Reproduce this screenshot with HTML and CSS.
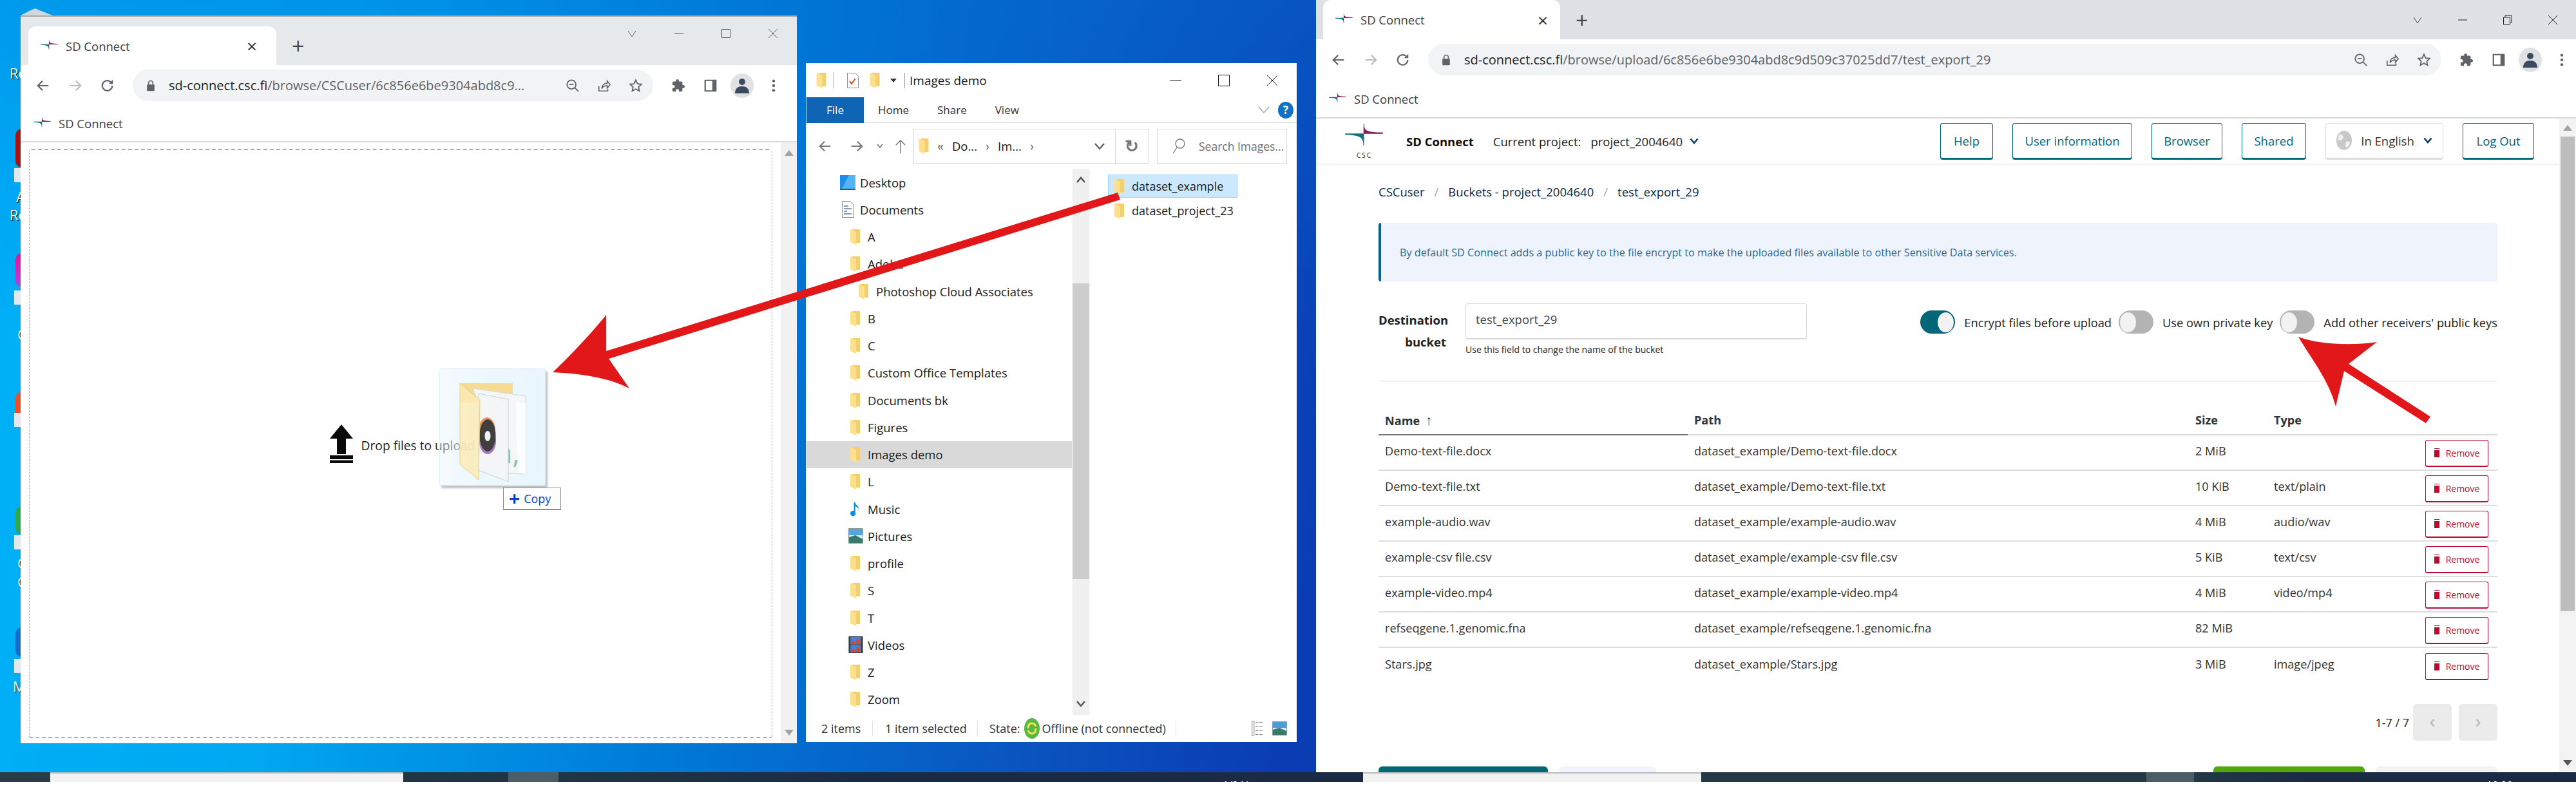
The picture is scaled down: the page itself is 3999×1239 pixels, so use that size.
FILE: index.html
```html
<!DOCTYPE html>
<html lang="en">
<head>
    <meta charset="UTF-8">
    <title>SD Connect - drag and drop upload</title>
    <link rel="stylesheet" href="styles.css">
</head>
<body>
    <svg class="defs" width="0" height="0">
        <symbol id="i-back" viewBox="0 0 24 24"><path d="M21 12H4M11 4l-8 8 8 8" fill="none" stroke="currentColor" stroke-width="2.4"/></symbol>
        <symbol id="i-forward" viewBox="0 0 24 24"><path d="M3 12h17M13 4l8 8-8 8" fill="none" stroke="currentColor" stroke-width="2.4"/></symbol>
        <symbol id="i-reload" viewBox="0 0 24 24"><path d="M20 12a8.5 8.5 0 1 1-2.6-6.2" fill="none" stroke="currentColor" stroke-width="2.4"/><path d="M21 2v7h-7z" fill="currentColor"/></symbol>
        <symbol id="i-lock" viewBox="0 0 24 24"><path d="M8 11V7a4 4 0 0 1 8 0v4" fill="none" stroke="currentColor" stroke-width="2"/><rect x="5" y="10" width="14" height="12" rx="1.5" fill="currentColor"/></symbol>
        <symbol id="i-zoomout" viewBox="0 0 24 24"><circle cx="10" cy="10" r="7.5" fill="none" stroke="currentColor" stroke-width="2"/><path d="M15.5 15.5L22 22M6.5 10h7" stroke="currentColor" stroke-width="2"/></symbol>
        <symbol id="i-share" viewBox="0 0 24 24"><path d="M3 13v8h15v-3M8 17c0-6 4-9 9-9V4l5 6-5 6v-4c-4 0-7 1-9 5z" fill="none" stroke="currentColor" stroke-width="1.8"/></symbol>
        <symbol id="i-star" viewBox="0 0 24 24"><path d="M12 2.500l2.900 6.300 6.800.8-5 4.700 1.300 6.800-6-3.400-6 3.400 1.300-6.800-5-4.700 6.800-.8z" fill="none" stroke="currentColor" stroke-width="2"/></symbol>
        <symbol id="i-puzzle" viewBox="0 0 24 24"><path fill="currentColor" d="M20.5 11H19V7c0-1.1-.9-2-2-2h-4V3.5C13 2.12 11.88 1 10.5 1S8 2.12 8 3.5V5H4c-1.1 0-1.99.9-1.99 2v3.8H3.5c1.49 0 2.7 1.21 2.7 2.7s-1.21 2.7-2.7 2.7H2V20c0 1.1.9 2 2 2h3.8v-1.5c0-1.49 1.21-2.7 2.7-2.7 1.49 0 2.7 1.21 2.7 2.7V22H17c1.1 0 2-.9 2-2v-4h1.5c1.38 0 2.5-1.12 2.5-2.5S21.88 11 20.5 11z"/></symbol>
        <symbol id="i-side" viewBox="0 0 24 24"><path d="M3 3h18v18H3z" fill="none" stroke="currentColor" stroke-width="2.4"/><path d="M15 3h6v18h-6z" fill="currentColor"/></symbol>
        <symbol id="i-avatar" viewBox="0 0 36 38"><ellipse cx="18" cy="19" rx="18" ry="19" fill="#dfe1e5"/><circle cx="18" cy="13" r="5" fill="#3d4a5e"/><path d="M7 31c0-8 5-11 11-11s11 3 11 11z" fill="#3d4a5e"/></symbol>
        <symbol id="i-dots" viewBox="0 0 24 24"><circle cx="12" cy="4" r="2.4" fill="currentColor"/><circle cx="12" cy="12" r="2.4" fill="currentColor"/><circle cx="12" cy="20" r="2.4" fill="currentColor"/></symbol>
        <symbol id="i-csc" viewBox="0 0 72 52"><path d="M34.500 0h1.200c0 13 3 16 35.300 16.500v2.500H34.500z" fill="#8a1c5e"/><path d="M0 18.500h35.500V41h-1.200C34 27 30 21.500 0 21z" fill="#15707c"/></symbol>
        <symbol id="i-folder" viewBox="0 0 15 25"><path d="M3 1h12v21H3z" fill="#f5cf6b"/><path d="M0 1l9 4v20l-9-4z" fill="#fde08e"/></symbol>
        <symbol id="i-chevron" viewBox="0 0 14 10"><path d="M1.500 1.500L7 8l5.500-6.500" fill="none" stroke="#0b3a66" stroke-width="2.600"/></symbol>
    </svg>

    <div class="desktop">
        <!-- bits of desktop shortcuts that stick out from behind the windows -->
        <div class="shortcut sc-bin"></div>
        <span class="sc-label sc-l1">Re</span>
        <div class="shortcut sc-red"></div>
        <div class="shortcut sc-tile sc-t1"></div>
        <span class="sc-label sc-l2">A</span>
        <span class="sc-label sc-l3">Re</span>
        <div class="shortcut sc-pink"></div>
        <div class="shortcut sc-tile sc-t2"></div>
        <span class="sc-label sc-l5">C</span>
        <div class="shortcut sc-orange"></div>
        <div class="shortcut sc-tile sc-t3"></div>
        <div class="shortcut sc-green"></div>
        <div class="shortcut sc-tile sc-t4"></div>
        <span class="sc-label sc-l6">C</span>
        <span class="sc-label sc-l7">C</span>
        <div class="shortcut sc-blue"></div>
        <div class="shortcut sc-tile sc-t5"></div>
        <span class="sc-label sc-l4">M</span>

        <!-- left browser -->
        <section class="window browser browser-small">
            <div class="tabstrip">
                <div class="tab">
                    <svg class="favicon" viewBox="0 0 72 52"><use href="#i-csc"/></svg>
                    <span class="tab-title">SD Connect</span>
                    <span class="tab-close">×</span>
                </div>
                <span class="tab-new">+</span>
                <div class="win-controls">
                    <svg class="wc" viewBox="0 0 16 16"><path d="M2 4l6 9 6-9" fill="none" stroke="#666"/></svg>
                    <svg class="wc" viewBox="0 0 16 16"><path d="M1 8h14" stroke="#555"/></svg>
                    <svg class="wc" viewBox="0 0 16 16"><path d="M1.500 1.500h13v13h-13z" fill="none" stroke="#555"/></svg>
                    <svg class="wc" viewBox="0 0 16 16"><path d="M1 1l14 14M15 1L1 15" stroke="#555"/></svg>
                </div>
            </div>
            <div class="toolbar">
                <svg class="tb-icon dark"><use href="#i-back"/></svg>
                <svg class="tb-icon faded"><use href="#i-forward"/></svg>
                <svg class="tb-icon dark"><use href="#i-reload"/></svg>
                <div class="omnibox">
                    <svg class="omni-lock"><use href="#i-lock"/></svg>
                    <span class="url"><b>sd-connect.csc.fi</b>/browse/CSCuser/6c856e6be9304abd8c9...</span>
                    <svg class="tb-icon dark push"><use href="#i-zoomout"/></svg>
                    <svg class="tb-icon dark"><use href="#i-share"/></svg>
                    <svg class="tb-icon dark"><use href="#i-star"/></svg>
                </div>
                <svg class="tb-icon dark"><use href="#i-puzzle"/></svg>
                <svg class="tb-icon dark"><use href="#i-side"/></svg>
                <svg class="tb-avatar"><use href="#i-avatar"/></svg>
                <svg class="tb-icon dark"><use href="#i-dots"/></svg>
            </div>
            <div class="bookmarks">
                <svg class="favicon" viewBox="0 0 72 52"><use href="#i-csc"/></svg>
                <span>SD Connect</span>
            </div>
            <div class="small-page">
                <div class="dropzone">
                    <svg class="drop-icon" viewBox="0 0 36 60"><path d="M18 0L36 22H25v24H11V22H0z" fill="#0a0a0a"/><path d="M0 48h36v6H0zM0 55.500h36V60H0z" fill="#0a0a0a"/></svg>
                    <span class="drop-text">Drop files to upload.</span>
                </div>
                <div class="scrollbar small-scroll">
                    <i class="arrow-up"></i>
                    <i class="arrow-down"></i>
                </div>
            </div>
        </section>

        <!-- file explorer -->
        <section class="window explorer">
            <div class="ex-title">
                <svg class="ex-folder"><use href="#i-folder"/></svg>
                <i class="ex-sep"></i>
                <svg class="ex-doc" viewBox="0 0 18 24"><path d="M.5.500h12l5 5v18H.5z" fill="#fff" stroke="#888"/><path d="M4 13l3 4 6-8" fill="none" stroke="#e2471a" stroke-width="2"/></svg>
                <svg class="ex-folder"><use href="#i-folder"/></svg>
                <i class="ex-drop"></i>
                <i class="ex-sep"></i>
                <span class="ex-name">Images demo</span>
                <div class="ex-controls">
                    <svg class="ex-wc" viewBox="0 0 18 18"><path d="M0 9h18" stroke="#111"/></svg>
                    <svg class="ex-wc" viewBox="0 0 18 18"><path d="M.5.500h17v17H.5z" fill="none" stroke="#111"/></svg>
                    <svg class="ex-wc" viewBox="0 0 18 18"><path d="M1 1l16 16M17 1L1 17" stroke="#111"/></svg>
                </div>
            </div>
            <div class="ex-ribbon">
                <span class="ex-file">File</span>
                <span class="ex-tab">Home</span>
                <span class="ex-tab">Share</span>
                <span class="ex-tab">View</span>
                <svg class="ex-rchev" viewBox="0 0 18 12"><path d="M1 1l8 9 8-9" fill="none" stroke="#aaa" stroke-width="1.500"/></svg>
                <span class="ex-help">?</span>
            </div>
            <div class="ex-nav">
                <svg class="ex-arrow"><use href="#i-back"/></svg>
                <svg class="ex-arrow"><use href="#i-forward"/></svg>
                <svg class="ex-mini" viewBox="0 0 10 8"><path d="M1 1l4 5 4-5" fill="none" stroke="#777" stroke-width="1.600"/></svg>
                <svg class="ex-up" viewBox="0 0 20 24"><path d="M10 24V2M2 10l8-8 8 8" fill="none" stroke="#777" stroke-width="1.600"/></svg>
                <div class="ex-address">
                    <svg class="ex-folder"><use href="#i-folder"/></svg>
                    <span class="crumb-sep">«</span>
                    <span class="ex-crumb">Do...</span>
                    <span class="crumb-sep">›</span>
                    <span class="ex-crumb">Im...</span>
                    <span class="crumb-sep">›</span>
                    <svg class="ex-addr-chev" viewBox="0 0 16 12"><path d="M1 2l7 8 7-8" fill="none" stroke="#666" stroke-width="2.400"/></svg>
                    <span class="ex-refresh">↻</span>
                </div>
                <div class="ex-search">
                    <svg class="ex-lens" viewBox="0 0 20 24"><circle cx="12" cy="8" r="7" fill="none" stroke="#777" stroke-width="1.300"/><path d="M7 14L1 23" stroke="#777" stroke-width="1.300"/></svg>
                    <span>Search Images...</span>
                </div>
            </div>
            <div class="ex-body">
                <ul class="tree">
                    <li><svg class="tree-img" viewBox="0 0 24 24"><path d="M0 1h24v21H0z" fill="#1d8ee8"/><path d="M14 1h10v21H3z" fill="#55b3f5"/><path d="M0 22h24v2H0z" fill="#0b5fa8"/></svg>Desktop</li>
                    <li><svg class="tree-img" viewBox="0 0 24 26"><path d="M3.500.500h12l6 6v19h-18z" fill="#fff" stroke="#8a8a8a"/><path d="M6 8h7M6 12h12M6 16h5M6 20h12" stroke="#5d7ea0" stroke-width="1.500"/></svg>Documents</li>
                    <li class="lv1"><svg class="tree-f"><use href="#i-folder"/></svg>A</li>
                    <li class="lv1"><svg class="tree-f"><use href="#i-folder"/></svg>Adobe</li>
                    <li class="lv2"><svg class="tree-f"><use href="#i-folder"/></svg>Photoshop Cloud Associates</li>
                    <li class="lv1"><svg class="tree-f"><use href="#i-folder"/></svg>B</li>
                    <li class="lv1"><svg class="tree-f"><use href="#i-folder"/></svg>C</li>
                    <li class="lv1"><svg class="tree-f"><use href="#i-folder"/></svg>Custom Office Templates</li>
                    <li class="lv1"><svg class="tree-f"><use href="#i-folder"/></svg>Documents bk</li>
                    <li class="lv1"><svg class="tree-f"><use href="#i-folder"/></svg>Figures</li>
                    <li class="lv1 current"><svg class="tree-f"><use href="#i-folder"/></svg>Images demo</li>
                    <li class="lv1"><svg class="tree-f"><use href="#i-folder"/></svg>L</li>
                    <li class="lv1"><svg class="tree-f" viewBox="0 0 18 28"><path d="M8 1v20" stroke="#0a8fe0" stroke-width="2.500"/><ellipse cx="5" cy="22" rx="5" ry="5" fill="#0a8fe0"/><path d="M9 1c1 6 8 7 7 15-1-5-4-6-7-7z" fill="#0a8fe0"/></svg>Music</li>
                    <li class="lv1 wide"><svg class="tree-pic" viewBox="0 0 23 24"><path d="M.5.500h22v23H.5z" fill="#d8ecf8" stroke="#999"/><path d="M1 1h21v10H1z" fill="#5aa4dc"/><path d="M1 14l10-3 11 6v6H1z" fill="#3a7a6a"/></svg>Pictures</li>
                    <li class="lv1"><svg class="tree-f"><use href="#i-folder"/></svg>profile</li>
                    <li class="lv1"><svg class="tree-f"><use href="#i-folder"/></svg>S</li>
                    <li class="lv1"><svg class="tree-f"><use href="#i-folder"/></svg>T</li>
                    <li class="lv1 wide"><svg class="tree-pic" viewBox="0 0 23 27"><path d="M0 0h23v27H0z" fill="#3d3d3d"/><path d="M3 1h17v12H3zM3 14h17v12H3z" fill="#3f86d8"/><path d="M5 8h6v5H5zM12 4h6v9h-6zM5 21h6v5H5zM12 17h6v9h-6z" fill="#d24a36"/></svg>Videos</li>
                    <li class="lv1"><svg class="tree-f"><use href="#i-folder"/></svg>Z</li>
                    <li class="lv1"><svg class="tree-f"><use href="#i-folder"/></svg>Zoom</li>
                </ul>
                <div class="ex-scroll">
                    <svg class="ex-sb-arrow" viewBox="0 0 14 10"><path d="M1 9l6-7 6 7" fill="none" stroke="#555" stroke-width="2.500"/></svg>
                    <div class="ex-thumb"></div>
                    <svg class="ex-sb-arrow" viewBox="0 0 14 10"><path d="M1 1l6 7 6-7" fill="none" stroke="#555" stroke-width="2.500"/></svg>
                </div>
                <div class="ex-files">
                    <div class="ex-item selected"><svg class="tree-f"><use href="#i-folder"/></svg>dataset_example</div>
                    <div class="ex-item"><svg class="tree-f"><use href="#i-folder"/></svg>dataset_project_23</div>
                </div>
            </div>
            <div class="ex-status">
                <span class="st-a">2 items</span>
                <span class="st-b">1 item selected</span>
                <span class="st-c">State:</span>
                <svg class="st-sync" viewBox="0 0 24 32"><ellipse cx="12" cy="16" rx="12" ry="16" fill="#55b948"/><path d="M6 16c0-6 3-8 6-8s5 2 6 5M18 16c0 6-3 8-6 8s-5-2-6-5" fill="none" stroke="#f4e04a" stroke-width="3"/></svg>
                <span class="st-d">Offline (not connected)</span>
                <div class="st-views">
                    <svg class="st-view" viewBox="0 0 23 30"><path d="M.5.500h4v29h-4z" fill="#eee" stroke="#888"/><path d="M7 3h15M7 11h15M7 19h15M7 27h15" stroke="#555" stroke-dasharray="6 2"/></svg>
                    <svg class="st-view" viewBox="0 0 23 22"><path d="M.5.500h22v21H.5z" fill="#d8ecf8" stroke="#999"/><path d="M1 1h21v9H1z" fill="#4f9bd8"/><path d="M1 13l10-3 11 5v6H1z" fill="#3a7a6a"/></svg>
                </div>
            </div>
        </section>

        <!-- right browser -->
        <section class="window browser browser-big">
            <div class="tabstrip">
                <div class="tab">
                    <svg class="favicon" viewBox="0 0 72 52"><use href="#i-csc"/></svg>
                    <span class="tab-title">SD Connect</span>
                    <span class="tab-close">×</span>
                </div>
                <span class="tab-new">+</span>
                <div class="win-controls">
                    <svg class="wc" viewBox="0 0 16 16"><path d="M2 4l6 9 6-9" fill="none" stroke="#444"/></svg>
                    <svg class="wc" viewBox="0 0 16 16"><path d="M1 8h14" stroke="#222"/></svg>
                    <svg class="wc" viewBox="0 0 16 16"><path d="M1.500 4h10v11h-10zM4 4V1h10v11h-2" fill="none" stroke="#222"/></svg>
                    <svg class="wc" viewBox="0 0 16 16"><path d="M1 1l14 14M15 1L1 15" stroke="#222"/></svg>
                </div>
            </div>
            <div class="toolbar">
                <svg class="tb-icon dark"><use href="#i-back"/></svg>
                <svg class="tb-icon faded"><use href="#i-forward"/></svg>
                <svg class="tb-icon dark"><use href="#i-reload"/></svg>
                <div class="omnibox">
                    <svg class="omni-lock"><use href="#i-lock"/></svg>
                    <span class="url"><b>sd-connect.csc.fi</b>/browse/upload/6c856e6be9304abd8c9d509c37025dd7/test_export_29</span>
                    <svg class="tb-icon dark push"><use href="#i-zoomout"/></svg>
                    <svg class="tb-icon dark"><use href="#i-share"/></svg>
                    <svg class="tb-icon dark"><use href="#i-star"/></svg>
                </div>
                <svg class="tb-icon dark"><use href="#i-puzzle"/></svg>
                <svg class="tb-icon dark"><use href="#i-side"/></svg>
                <svg class="tb-avatar"><use href="#i-avatar"/></svg>
                <svg class="tb-icon dark"><use href="#i-dots"/></svg>
            </div>
            <div class="bookmarks">
                <svg class="favicon" viewBox="0 0 72 52"><use href="#i-csc"/></svg>
                <span>SD Connect</span>
            </div>
            <div class="app-wrap">
                <div class="app">
                    <header class="app-header">
                        <span class="app-logo">
                            <svg class="app-star"><use href="#i-csc"/></svg>
                            <span class="app-logo-text">CSC</span>
                        </span>
                        <strong class="app-name">SD Connect</strong>
                        <span class="app-project">Current project:</span>
                        <span class="app-project-name">project_2004640</span>
                        <svg class="chev"><use href="#i-chevron"/></svg>
                        <nav class="app-nav">
                            <a class="btn btn-help">Help</a>
                            <a class="btn btn-user">User information</a>
                            <a class="btn btn-browser">Browser</a>
                            <a class="btn btn-shared">Shared</a>
                            <a class="btn btn-lang">
                                <svg class="globe" viewBox="0 0 24 30"><ellipse cx="12" cy="15" rx="12" ry="15" fill="#c8c8c8"/><path d="M5 5c4 1 7 3 5 7s-6 3-8 1M15 17c5-2 7 1 5 5s-5 4-6 2z" fill="#f1f1f1"/></svg>
                                In English
                                <svg class="chev"><use href="#i-chevron"/></svg>
                            </a>
                            <a class="btn btn-logout">Log Out</a>
                        </nav>
                    </header>
                    <main class="app-main">
                        <div class="crumbs">
                            <span>CSCuser</span><i>/</i><span>Buckets - project_2004640</span><i>/</i><span>test_export_29</span>
                        </div>
                        <div class="notice">By default SD Connect adds a public key to the file encrypt to make the uploaded files available to other Sensitive Data services.</div>
                        <div class="upload-form">
                            <label class="dest-label">Destination bucket</label>
                            <div class="dest-field">
                                <div class="dest-input">test_export_29</div>
                                <small>Use this field to change the name of the bucket</small>
                            </div>
                            <div class="switches">
                                <span class="switch on"><i></i></span><span class="switch-text t1">Encrypt files before upload</span>
                                <span class="switch"><i></i></span><span class="switch-text t2">Use own private key</span>
                                <span class="switch"><i></i></span><span class="switch-text t3">Add other receivers' public keys</span>
                            </div>
                        </div>
                        <table class="files">
                            <thead>
                                <tr><th class="col-name sorted">Name <span class="sort">↑</span></th><th class="col-path">Path</th><th class="col-size">Size</th><th class="col-type">Type</th><th></th></tr>
                            </thead>
                            <tbody>
                                <tr><td>Demo-text-file.docx</td><td>dataset_example/Demo-text-file.docx</td><td>2 MiB</td><td></td><td><button class="remove"><i></i>Remove</button></td></tr>
                                <tr><td>Demo-text-file.txt</td><td>dataset_example/Demo-text-file.txt</td><td>10 KiB</td><td>text/plain</td><td><button class="remove"><i></i>Remove</button></td></tr>
                                <tr><td>example-audio.wav</td><td>dataset_example/example-audio.wav</td><td>4 MiB</td><td>audio/wav</td><td><button class="remove"><i></i>Remove</button></td></tr>
                                <tr><td>example-csv file.csv</td><td>dataset_example/example-csv file.csv</td><td>5 KiB</td><td>text/csv</td><td><button class="remove"><i></i>Remove</button></td></tr>
                                <tr><td>example-video.mp4</td><td>dataset_example/example-video.mp4</td><td>4 MiB</td><td>video/mp4</td><td><button class="remove"><i></i>Remove</button></td></tr>
                                <tr><td>refseqgene.1.genomic.fna</td><td>dataset_example/refseqgene.1.genomic.fna</td><td>82 MiB</td><td></td><td><button class="remove"><i></i>Remove</button></td></tr>
                                <tr><td>Stars.jpg</td><td>dataset_example/Stars.jpg</td><td>3 MiB</td><td>image/jpeg</td><td><button class="remove"><i></i>Remove</button></td></tr>
                            </tbody>
                        </table>
                        <div class="pager">
                            <span>1-7 / 7</span>
                            <span class="page-btn">‹</span>
                            <span class="page-btn">›</span>
                        </div>
                        <div class="form-actions">
                            <span class="act act-teal"></span>
                            <span class="act act-light"></span>
                            <span class="act act-green"></span>
                            <span class="act act-grey"></span>
                        </div>
                    </main>
                </div>
                <div class="scrollbar big-scroll">
                    <i class="arrow-up"></i>
                    <div class="big-thumb"></div>
                    <i class="arrow-down"></i>
                </div>
            </div>
        </section>

        <div class="drag-ghost">
            <svg viewBox="0 0 165 182" width="165" height="182">
                <path d="M31 22h82v30H31z" fill="#f5dc94"/>
                <path d="M51 30l82 12v121l-27-1z" fill="#f5f6f8" stroke="#d6d6d6"/>
                <path d="M118 52l15 0v111l-12-2z" fill="#fbfdfe"/>
                <text x="88" y="146" font-size="44" fill="#7cc6a4" font-family="Open Sans, sans-serif">a,</text>
                <path d="M60 38l46 9v128l-46-18z" fill="#f3f5f7" stroke="#cfcfcf"/>
                <ellipse cx="73" cy="95" rx="13" ry="20" fill="#ef9360"/>
                <ellipse cx="74" cy="112" rx="13" ry="20" fill="#a878c4"/>
                <ellipse cx="74" cy="103" rx="12.500" ry="25" fill="#3f3f3f"/>
                <ellipse cx="74" cy="104" rx="4.500" ry="8" fill="#f2f2f2"/>
                <path d="M31 22l31 26-2 124-29-24z" fill="#fbecb4" fill-opacity="0.82" stroke="#e3cf8a"/>
            </svg>
        </div>
        <div class="drag-copy"><b>+</b>Copy</div>

        <!-- annotation arrows -->
        <svg class="arrows" viewBox="0 0 3999 1199" width="3999" height="1199">
            <path d="M858 578C892 546 924 510 941 489L941 545L1735 299L1739 310L945 557L977 603C945 586 900 580 858 578z" fill="#e2171a"/>
            <path d="M3568 523C3600 535 3650 537 3690 531L3646 565L3773 647L3766 657L3639 576L3626 631C3615 590 3590 560 3568 523z" fill="#e2171a"/>
        </svg>
    </div>

    <div class="taskbar">
        <span class="tb-seg s1"></span>
        <span class="tb-seg s-search s2"></span>
        <span class="tb-seg s3"></span>
        <span class="tb-seg s-active s4"></span>
        <span class="tb-seg s5"><em class="clock c1">1/24/</em></span>
        <span class="tb-seg s-search s6"></span>
        <span class="tb-seg s7"></span>
        <span class="tb-seg s-active s8"></span>
        <span class="tb-seg s9"><em class="clock c2">10:20</em></span>
    </div>
</body>
</html>
```

FILE: styles.css
```css
* {
    box-sizing: border-box;
}
html, body {
    margin: 0;
    padding: 0;
    background: #fff;
}
body {
    width: 3999px;
    height: 1239px;
    overflow: hidden;
    font-family: "Open Sans", sans-serif;
    color: #222;
}
.defs {
    position: absolute;
}

/* desktop */
.desktop {
    position: relative;
    height: 1199px;
    overflow: hidden;
    background:
        linear-gradient(180deg, rgba(0, 110, 215, 0.35), rgba(0, 110, 215, 0) 45%),
        linear-gradient(100deg, #00b2f8 0%, #00a8f2 14%, #0078d6 30%, #0a56c0 42%, #0a3db4 52%);
}
.shortcut {
    position: absolute;
    width: 10px;
    left: 24px;
    border-radius: 10px 0 0 10px;
}
.sc-bin {
    left: 32px;
    top: 13px;
    width: 50px;
    height: 11px;
    background: #cfd8de;
    clip-path: polygon(0 100%, 30% 30%, 45% 0, 60% 30%, 100% 100%);
    border-radius: 0;
}
.sc-red { top: 200px; height: 60px; background: #a31414; }
.sc-pink { top: 393px; height: 53px; background: linear-gradient(#e8119f, #a04be0); }
.sc-orange { top: 608px; height: 42px; background: #e8502a; }
.sc-green { top: 786px; height: 44px; background: #2ba94f; }
.sc-blue { top: 974px; height: 46px; background: #0f6fc9; }
.sc-tile {
    left: 22px;
    height: 22px;
    border-radius: 0;
    background: #e4e8ec;
}
.sc-t1 { top: 261px; }
.sc-t2 { top: 451px; }
.sc-t3 { top: 641px; }
.sc-t4 { top: 831px; }
.sc-t5 { top: 1023px; }
.sc-label {
    position: absolute;
    color: #fff;
    font-size: 22px;
    text-shadow: 1px 1px 1px #000;
}
.sc-l1 { left: 15px; top: 98px; }
.sc-l2 { left: 25px; top: 290px; }
.sc-l3 { left: 15px; top: 318px; }
.sc-l4 { left: 20px; top: 1050px; }
.sc-l5 { left: 27px; top: 504px; }
.sc-l6 { left: 27px; top: 859px; }
.sc-l7 { left: 27px; top: 888px; }

.window {
    position: absolute;
    display: flex;
    flex-direction: column;
    background: #fff;
    overflow: hidden;
}

/* chrome */
.browser-small {
    left: 32px;
    top: 24px;
    width: 1205px;
    height: 1130px;
    border-top: 2px solid #a8a8a8;
}
.browser-big {
    left: 2043px;
    top: 0;
    width: 1956px;
    height: 1199px;
}
.tabstrip {
    display: flex;
    align-items: flex-end;
    flex: none;
}
.browser-small .tabstrip {
    height: 75px;
    background: #e6e9ec;
    padding-left: 12px;
}
.browser-big .tabstrip {
    height: 61px;
    background: #dee1e6;
    padding-left: 11px;
}
.tab {
    display: flex;
    align-items: center;
    background: #fff;
    border-radius: 12px 12px 0 0;
    font-size: 18.500px;
    color: #3c4043;
}
.browser-small .tab {
    width: 385px;
    height: 60px;
    padding-left: 19px;
}
.browser-big .tab {
    width: 368px;
    height: 61px;
    padding-left: 19px;
}
.favicon {
    width: 27px;
    height: 23px;
    flex: none;
}
.tab .favicon {
    margin-right: 12px;
}
.tab-title {
    flex: 1;
}
.tab-close {
    width: 46px;
    font-size: 28px;
    line-height: 1;
    color: #333;
}
.browser-big .tab-close {
    width: 35px;
}
.tab-new {
    font-size: 34px;
    line-height: 60px;
    margin-left: 24px;
    color: #444;
}
.win-controls {
    margin-left: auto;
    display: flex;
    align-self: center;
    gap: 54px;
    margin-right: 28px;
}
.wc {
    width: 16px;
    height: 16px;
}
.browser-small .win-controls {
    gap: 57px;
    margin-right: 29px;
}
.browser-small .wc {
    height: 18px;
    margin-bottom: 24px;
}
.toolbar {
    display: flex;
    align-items: center;
    flex: none;
    height: 63px;
    padding: 0 24px;
    gap: 28px;
}
.tb-icon {
    width: 22px;
    height: 24px;
    flex: none;
}
.dark { color: #5f6368; }
.faded { color: #b8babd; }
.omnibox {
    display: flex;
    align-items: center;
    height: 49px;
    background: #f1f3f4;
    border-radius: 25px;
    padding: 0 16px 0 18px;
    gap: 27px;
    flex: none;
}
.browser-small .omnibox { width: 808px; }
.browser-big .omnibox { width: 1573px; }
.omni-lock {
    width: 20px;
    height: 24px;
    color: #5f6368;
    flex: none;
    margin-right: -9px;
}
.url {
    font-size: 20px;
    color: #5f6368;
    white-space: nowrap;
}
.url b {
    font-weight: 400;
    color: #202124;
}
.push {
    margin-left: auto;
}
.tb-avatar {
    width: 36px;
    height: 38px;
    flex: none;
    margin: 0 -8px;
}
.bookmarks {
    display: flex;
    align-items: center;
    flex: none;
    gap: 12px;
    font-size: 18.500px;
    color: #3c4043;
    padding-left: 20px;
    border-bottom: 2px solid #d9d9d9;
}
.browser-small .bookmarks { height: 57px; }
.browser-big .bookmarks { height: 60px; }

/* left page */
.small-page {
    flex: 1;
    display: flex;
    min-height: 0;
}
.dropzone {
    flex: 1;
    margin: 10px 13px 8px 13px;
    padding-left: 10px;
    display: flex;
    align-items: center;
    justify-content: center;
    gap: 13px;
    border: 2px dashed #aaa;
    border-left-width: 1px;
    border-right-width: 1px;
    border-radius: 4px;
}
.drop-icon {
    width: 36px;
    height: 60px;
}
.drop-text {
    font-size: 19.200px;
    margin-top: 5px;
}
.scrollbar {
    position: relative;
    flex: none;
    width: 25px;
    background: #f1f1f1;
}
.arrow-up, .arrow-down {
    position: absolute;
    left: 6px;
    width: 0;
    height: 0;
    border-left: 7px solid transparent;
    border-right: 7px solid transparent;
}
.arrow-up {
    top: 12px;
    border-bottom: 9px solid #a3a3a3;
}
.arrow-down {
    bottom: 12px;
    border-top: 9px solid #a3a3a3;
}

/* explorer */
.explorer {
    left: 1251px;
    top: 98px;
    width: 762px;
    height: 1054px;
    font-size: 18.500px;
    color: #1b1b1b;
}
.ex-title {
    display: flex;
    align-items: center;
    flex: none;
    height: 53px;
    padding-left: 16px;
}
.ex-folder {
    width: 16px;
    height: 25px;
    flex: none;
}
.ex-sep {
    width: 1px;
    height: 24px;
    background: #a0a0a0;
    margin: 0 20px 0 11px;
}
.ex-doc {
    width: 18px;
    height: 26px;
    margin-right: 17px;
}
.ex-drop {
    width: 0;
    height: 0;
    margin-left: 16px;
    margin-right: 1px;
    border-left: 5px solid transparent;
    border-right: 5px solid transparent;
    border-top: 6px solid #333;
}
.ex-title .ex-drop + .ex-sep {
    margin: 0 7px 0 11px;
}
.ex-name {
    font-size: 19px;
}
.ex-controls {
    margin-left: auto;
    display: flex;
    gap: 57px;
    margin-right: 29px;
}
.ex-wc {
    width: 18px;
    height: 18px;
}
.ex-ribbon {
    display: flex;
    align-items: center;
    flex: none;
    height: 40px;
    margin-left: 1px;
    border-bottom: 1px solid #d9d9d9;
    font-size: 17px;
    color: #333;
}
.ex-file {
    width: 89px;
    height: 40px;
    line-height: 40px;
    text-align: center;
    background: #0f64b4;
    color: #fff;
}
.ex-tab {
    margin-left: 22px;
    margin-right: 22px;
}
.ex-rchev {
    width: 18px;
    height: 12px;
    margin-left: auto;
    margin-right: 13px;
}
.ex-help {
    width: 24px;
    height: 26px;
    margin-right: 5px;
    border-radius: 50%;
    background: #0f72c3;
    color: #fff;
    font-weight: 700;
    text-align: center;
    line-height: 26px;
}
.ex-nav {
    display: flex;
    align-items: center;
    flex: none;
    height: 71px;
    padding-left: 19px;
    color: #7a7a7a;
}
.ex-arrow {
    width: 22px;
    height: 24px;
    margin-right: 27px;
}
.ex-mini {
    width: 10px;
    height: 8px;
    margin-left: -7px;
    margin-right: 18px;
}
.ex-up {
    width: 18px;
    height: 28px;
    margin-right: 11px;
}
.ex-address {
    display: flex;
    align-items: center;
    width: 365px;
    height: 54px;
    padding-left: 7px;
    border: 1px solid #d9d9d9;
    margin-right: 13px;
}
.crumb-sep {
    font-size: 20px;
    color: #666;
    margin: 0 13px;
}
.ex-crumb {
    color: #1b1b1b;
}
.ex-addr-chev {
    width: 16px;
    height: 12px;
    margin-left: auto;
    margin-right: 16px;
}
.ex-refresh {
    width: 51px;
    height: 100%;
    line-height: 50px;
    text-align: center;
    font-size: 26px;
    font-weight: 700;
    color: #777;
    border-left: 1px solid #d9d9d9;
}
.ex-search {
    display: flex;
    align-items: center;
    width: 202px;
    height: 54px;
    padding-left: 23px;
    gap: 21px;
    border: 1px solid #d9d9d9;
    color: #6d6d6d;
    font-size: 17.500px;
    white-space: nowrap;
    overflow: hidden;
}
.ex-lens {
    width: 20px;
    height: 24px;
    flex: none;
}
.ex-body {
    flex: 1;
    display: flex;
    min-height: 0;
}
.tree {
    list-style: none;
    margin: 0;
    padding: 0;
    margin-left: 1px;
    width: 412px;
    flex: none;
}
.tree li {
    display: flex;
    align-items: center;
    height: 42.250px;
    padding-left: 52px;
    white-space: nowrap;
}
.tree li.lv1 { padding-left: 68px; }
.tree li.lv2 { padding-left: 81px; }
.tree li.lv1.wide { padding-left: 65px; }
.tree li.current { background: #d9d9d9; }
.tree-img {
    width: 24px;
    height: 26px;
    margin-right: 7px;
    flex: none;
}
.tree-f {
    width: 15px;
    height: 25px;
    margin-right: 12px;
    flex: none;
}
.tree-pic {
    width: 23px;
    height: 26px;
    margin-right: 7px;
    flex: none;
}
.ex-scroll {
    display: flex;
    flex-direction: column;
    align-items: center;
    justify-content: space-between;
    flex: none;
    width: 27px;
    height: 848px;
    margin-left: 1px;
    padding: 12px 0;
    background: #f0f0f0;
    position: relative;
    border-right: 1px solid #f7f7f7;
}
.ex-sb-arrow {
    width: 14px;
    height: 10px;
}
.ex-thumb {
    position: absolute;
    left: 0;
    right: 0;
    top: 178px;
    height: 459px;
    background: #cdcdcd;
}
.ex-files {
    padding: 9px 0 0 28px;
    flex: 1;
    font-size: 18px;
}
.ex-item {
    display: flex;
    align-items: center;
    width: 201px;
    height: 36px;
    margin-bottom: 2px;
    padding-left: 9px;
    white-space: nowrap;
    border: 1px solid transparent;
}
.ex-item.selected {
    background: #cce8ff;
    border-color: #99d1ff;
}
.ex-status {
    display: flex;
    align-items: center;
    flex: none;
    height: 42px;
    font-size: 18px;
    color: #333;
    padding-left: 24px;
}
.st-a {
    width: 80px;
    border-right: 1px solid #e4e4e4;
}
.st-b {
    margin-left: 19px;
    width: 144px;
    border-right: 1px solid #e4e4e4;
}
.st-c {
    margin-left: 18px;
    margin-right: 6px;
}
.st-sync {
    width: 24px;
    height: 32px;
    margin-right: 4px;
}
.st-d {
    padding-right: 15px;
    border-right: 1px solid #e4e4e4;
    white-space: nowrap;
}
.st-views {
    margin-left: auto;
    display: flex;
    align-items: center;
    gap: 11px;
    margin-right: 15px;
}
.st-view {
    width: 23px;
    height: 24px;
}

/* app in the right browser */
.app-wrap {
    flex: 1;
    display: flex;
    min-height: 0;
}
.app {
    width: 1930px;
    flex: none;
}
.app-header {
    display: flex;
    align-items: center;
    height: 72px;
    padding-left: 39px;
    border-bottom: 2px solid #f2f2f2;
    font-size: 18.500px;
}
.app-logo {
    display: flex;
    flex-direction: column;
    align-items: center;
    width: 72px;
    flex: none;
}
.app-star {
    width: 72px;
    height: 43px;
}
.app-logo-text {
    font-size: 10px;
    line-height: 12px;
    letter-spacing: 2px;
    color: #333;
}
.app-name {
    margin-left: 29px;
    font-weight: 700;
    color: #111;
}
.app-project {
    margin-left: 30px;
    color: #222;
}
.app-project-name {
    margin-left: 15px;
    color: #222;
}
.chev {
    width: 14px;
    height: 10px;
    margin-left: 11px;
    flex: none;
}
.app-nav {
    margin-left: auto;
    margin-right: 39px;
    display: flex;
    gap: 30px;
}
.btn {
    display: flex;
    align-items: center;
    justify-content: center;
    height: 57px;
    font-size: 18.500px;
    color: #006778;
    border: 1px solid #006778;
    border-bottom-width: 3px;
    border-radius: 4px;
}
.btn-help { width: 82px; }
.btn-user { width: 186px; }
.btn-browser { width: 110px; }
.btn-shared { width: 100px; }
.btn-logout { width: 111px; }
.btn-lang {
    width: 183px;
    color: #333;
    border-color: #dcdcdc;
    gap: 14px;
}
.btn-lang .chev {
    margin-left: 0;
}
.globe {
    width: 24px;
    height: 30px;
}
.app-main {
    padding: 0 96px 0 97px;
}
.crumbs {
    display: flex;
    align-items: center;
    height: 90px;
    padding-bottom: 8px;
    font-size: 18.500px;
    color: #0b2a4a;
}
.crumbs i {
    font-style: normal;
    color: #aaa;
    margin: 0 15px;
}
.notice {
    display: flex;
    align-items: center;
    height: 91px;
    padding-left: 29px;
    background: #eff3fb;
    border-left: 4px solid #00639a;
    border-radius: 4px;
    font-size: 16.200px;
    color: #1f6aa0;
}
.upload-form {
    display: flex;
    align-items: flex-start;
    height: 122px;
    margin-top: 34px;
    border-bottom: 2px solid #f2f2f2;
}
.dest-label {
    width: 105px;
    margin-top: 9px;
    text-align: right;
    font-size: 18.500px;
    line-height: 34px;
    font-weight: 700;
    color: #222;
}
.dest-field {
    margin-left: 30px;
}
.dest-input {
    display: flex;
    align-items: center;
    width: 530px;
    height: 56px;
    padding-left: 15px;
    padding-bottom: 6px;
    border: 1px solid #d8d8d8;
    border-bottom-width: 2px;
    border-radius: 4px;
    font-size: 18.500px;
    color: #444;
}
.dest-field small {
    display: block;
    margin-top: 6px;
    font-size: 14px;
    color: #222;
}
.switches {
    display: flex;
    align-items: center;
    margin-left: auto;
    margin-top: 11px;
    font-size: 18.300px;
    color: #222;
}
.switch {
    display: flex;
    align-items: center;
    width: 54px;
    height: 36px;
    padding: 0 2px;
    background: #b3b3b3;
    border-radius: 18px;
}
.switch i {
    width: 25px;
    height: 31px;
    background: #f2f2f2;
    border-radius: 50%;
}
.switch.on {
    justify-content: flex-end;
    background: #006778;
}
.switch-text {
    margin-left: 14px;
    white-space: nowrap;
}
.t1, .t2 {
    margin-right: 11px;
}
.files {
    width: 100%;
    margin-top: 35px;
    border-collapse: collapse;
    table-layout: fixed;
    font-size: 18.100px;
    color: #333;
}
.files th {
    height: 47px;
    padding: 2px 0 0 10px;
    text-align: left;
    font-weight: 700;
    border-bottom: 2px solid #d8d8d8;
}
.files th.sorted {
    border-bottom-color: #757575;
}
.sort {
    font-size: 21px;
    font-weight: 400;
    margin-left: 4px;
}
.col-name { width: 480px; }
.col-path { width: 778px; }
.col-size { width: 122px; }
.col-type { width: 236px; }
.files td {
    height: 55px;
    padding: 0 0 5px 10px;
    border-bottom: 2px solid #dedede;
    white-space: nowrap;
}
.files tr:last-child td {
    border-bottom: 0;
}
.files td:last-child {
    padding: 3px 0 0 0;
}
.remove {
    display: flex;
    align-items: center;
    justify-content: center;
    gap: 10px;
    width: 98px;
    height: 42px;
    margin-left: 9px;
    background: #fff;
    border: 1px solid #bc0a2f;
    border-bottom-width: 2px;
    border-radius: 3px;
    font-family: inherit;
    font-size: 14px;
    color: #bc0a2f;
}
.remove i {
    width: 8px;
    height: 13px;
    background: #bc0a2f;
    border-top: 2px solid #fff;
    box-shadow: 0 -1px 0 #bc0a2f;
}
.pager {
    display: flex;
    align-items: center;
    justify-content: flex-end;
    gap: 6px;
    margin-top: 33px;
    font-size: 18px;
}
.page-btn {
    width: 60px;
    height: 57px;
    line-height: 52px;
    text-align: center;
    font-size: 30px;
    color: #b5b5b5;
    background: #ebebeb;
    border-radius: 5px;
}
.page-btn:last-child {
    margin-left: 5px;
}
.form-actions {
    display: flex;
    gap: 17px;
    margin-top: 40px;
}
.act {
    height: 50px;
    border-radius: 6px;
}
.act-teal { width: 263px; background: #006778; }
.act-light { width: 151px; background: #eff3fb; }
.act-green { width: 235px; margin-left: auto; background: #51a808; }
.act-grey { width: 189px; background: #f3f3f3; }
.big-scroll {
    width: 26px;
    background: #f3f3f3;
}
.big-thumb {
    position: absolute;
    left: 2px;
    right: 2px;
    top: 28px;
    height: 737px;
    background: #bdbdbd;
}
.big-scroll .arrow-up { top: 10px; }
.big-scroll .arrow-down { bottom: 10px; border-top-color: #555; }

/* overlays */
.drag-ghost {
    position: absolute;
    left: 682px;
    top: 572px;
    width: 165px;
    height: 182px;
    background: linear-gradient(90deg, rgba(232, 245, 253, 0.4), rgba(232, 245, 253, 0.8) 40%, rgba(232, 245, 253, 0.95));
    border: 1px solid #dcf0fb;
    border-radius: 3px;
    box-shadow: 3px 4px 3px rgba(120, 120, 120, 0.45);
}
.drag-copy {
    position: absolute;
    left: 781px;
    top: 757px;
    display: flex;
    align-items: center;
    width: 90px;
    height: 35px;
    padding-left: 8px;
    gap: 6px;
    background: #fff;
    border: 1px solid #8a8a8a;
    border-bottom-width: 2px;
    font-size: 18px;
    color: #0a3fd0;
}
.drag-copy b {
    font-size: 30px;
    line-height: 30px;
    font-weight: 700;
}
.arrows {
    position: absolute;
    left: 0;
    top: 0;
}

/* taskbar, mostly cut off at the bottom */
.taskbar {
    display: flex;
    height: 15px;
    overflow: hidden;
    background: #1b2a45;
}
.tb-seg {
    display: block;
    flex: none;
    height: 15px;
}
.s1 { width: 78px; background: #2a3d47; }
.s-search {
    background: #f2f2f2;
    border-top: 2px solid #bbb;
}
.s2 { width: 548px; }
.s3 { width: 163px; background: #203643; }
.s-active { background: #4d5d68; }
.s4 { width: 78px; }
.s5 { width: 1249px; background: linear-gradient(90deg, #203643, #1b2a45 40%); }
.s6 { width: 525px; }
.s7 { width: 691px; background: #213845; }
.s8 { width: 74px; }
.s9 { width: 593px; background: linear-gradient(90deg, #213845, #1b2a45 30%); }
.clock {
    display: block;
    font-style: normal;
    font-size: 16px;
    line-height: 20px;
    color: #fff;
    padding-top: 10px;
}
.c1 { margin-left: 1031px; }
.c2 { margin-left: 454px; }
```
